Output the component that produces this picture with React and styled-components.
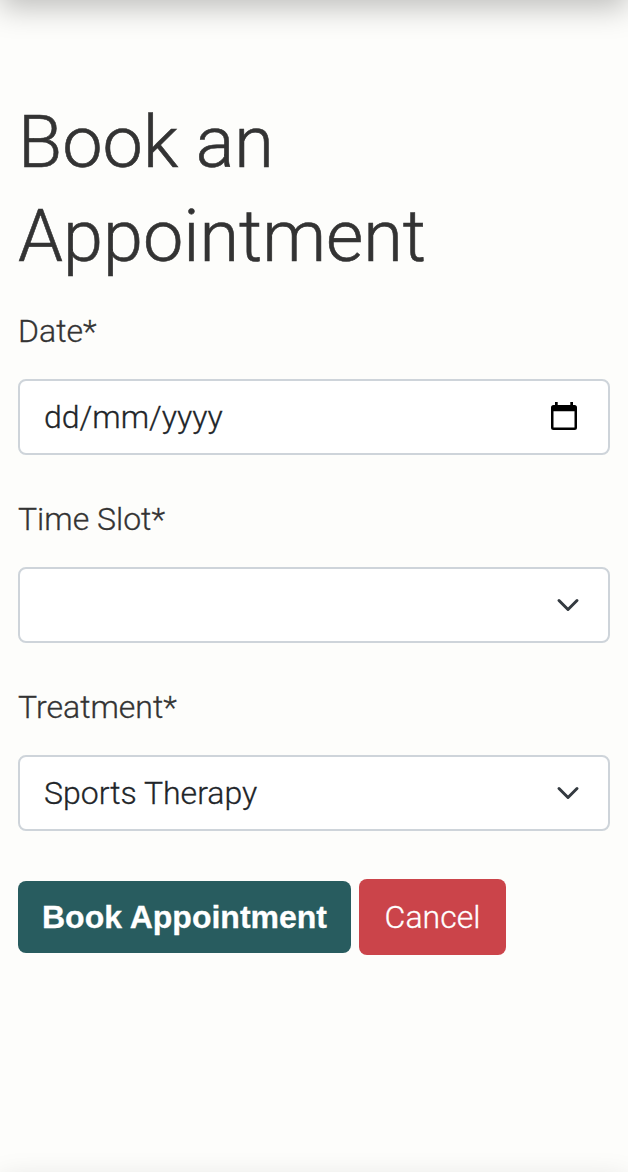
import React from "react";
import styled, { createGlobalStyle } from "styled-components";

const GlobalStyle = createGlobalStyle`
  *, *::before, *::after { box-sizing: border-box; }
  body {
    margin: 0;
    background: #fdfdfb;
    color: #333;
    font-family: Roboto, "Liberation Sans", sans-serif;
    font-weight: 300;
    font-size: 32px;
    line-height: 48px;
    -webkit-text-stroke: 0.3px currentColor;
  }
`;

const Page = styled.div`
  display: flex;
  flex-direction: column;
  height: 1172px;
  overflow: hidden;
`;

const Header = styled.header`
  flex: none;
  height: 60px;
  margin-top: -60px;
  box-shadow: 0 8px 30px rgba(0, 0, 0, 0.25);
`;

const Content = styled.main`
  flex: 1;
  padding: 96px 18px 0;
`;

const Footer = styled.footer`
  flex: none;
  height: 60px;
  margin-bottom: -60px;
  box-shadow: 0 8px 30px rgba(0, 0, 0, 0.13);
`;

const Title = styled.h1`
  margin: 0 0 23px;
  font-size: 72px;
  line-height: 94px;
  font-weight: 300;
  -webkit-text-stroke: 0.6px currentColor;
`;

const Field = styled.div`
  margin-bottom: 40px;
`;

const Label = styled.label`
  display: block;
  margin-bottom: 24px;
`;

const Control = styled.div`
  display: flex;
  align-items: center;
  justify-content: space-between;
  height: 76px;
  padding: 0 ${(p) => p.$end}px 0 24px;
  border: 2px solid #ced4da;
  border-radius: 8px;
  background: #fff;
  color: #212529;
`;

const Actions = styled.div`
  display: flex;
  align-items: center;
  gap: 8px;
  margin-top: 48px;
`;

const Button = styled.button`
  height: ${(p) => p.$height}px;
  width: ${(p) => p.$width}px;
  padding: 0;
  border: 0;
  border-radius: 8px;
  background: ${(p) => p.$color};
  color: #fff;
  font: ${(p) => p.$font};
  -webkit-text-stroke: 0.3px currentColor;
  white-space: nowrap;
`;

const CalendarSvg = styled.svg`
  margin-bottom: 2px;
`;

const CalendarIcon = () => (
  <CalendarSvg width="26" height="28" viewBox="0 0 26 28">
    <path fill="#000" fillRule="evenodd" d="M4 0h2.700v3h12.600V0h2.700v3h1.500a2.500 2.500 0 0 1 2.500 2.500v20a2.500 2.500 0 0 1-2.500 2.500h-21A2.500 2.500 0 0 1 0 25.500v-20A2.500 2.500 0 0 1 2.500 3H4zM2.500 9.200v16.300h21V9.200z" />
  </CalendarSvg>
);

const ChevronIcon = () => (
  <svg width="24" height="24" viewBox="0 0 16 16" fill="none" stroke="#343a40" strokeWidth="2" strokeLinecap="round" strokeLinejoin="round">
    <path d="m2 5 6 6 6-6" />
  </svg>
);

export default function App() {
  return (
    <Page>
      <GlobalStyle />
      <Header />
      <Content>
        <Title>Book an Appointment</Title>
        <Field>
          <Label>Date*</Label>
          <Control $end={31}><span>dd/mm/yyyy</span><CalendarIcon /></Control>
        </Field>
        <Field>
          <Label>Time Slot*</Label>
          <Control $end={28}><span /><ChevronIcon /></Control>
        </Field>
        <Field>
          <Label>Treatment*</Label>
          <Control $end={28}><span>Sports Therapy</span><ChevronIcon /></Control>
        </Field>
        <Actions>
          <Button $height={72} $width={333} $color="#285c5f" $font={'700 32px/48px "Liberation Sans", sans-serif'}>Book Appointment</Button>
          <Button $height={76} $width={147} $color="#cb444a" $font={'300 32px/48px Roboto, sans-serif'}>Cancel</Button>
        </Actions>
      </Content>
      <Footer />
    </Page>
  );
}
